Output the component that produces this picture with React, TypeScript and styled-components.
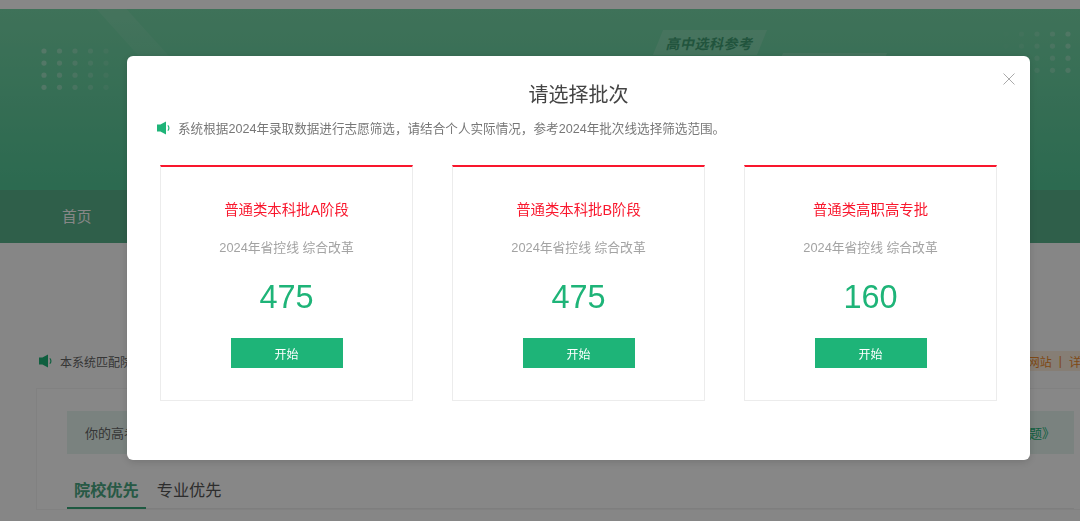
import React from 'react';
import styled, { createGlobalStyle } from 'styled-components';

const GREEN = '#1eb478';
const RED = '#f9172d';

const GlobalStyle = createGlobalStyle`
  html, body {
    margin: 0;
    padding: 0;
    height: 100%;
    overflow: hidden;
    background: #fdfdfd;
    font-family: "Liberation Sans", "Noto Sans CJK SC", sans-serif;
  }
  * {
    box-sizing: border-box;
  }
`;

const Page = styled.div`
  width: 1080px;
  height: 521px;
  overflow: hidden;
`;

const TopBar = styled.div`
  height: 9px;
  overflow: hidden;
  padding-left: 48px;
  background: #fff;
`;

const TopText = styled.div`
  margin-top: -15px;
  font-size: 13px;
  line-height: 17px;
  color: #d9772f;
`;

const Banner = styled.div`
  position: relative;
  height: 181px;
  overflow: hidden;
  background: linear-gradient(180deg, #77d7a8 0%, #53c897 100%);
`;

const Streak = styled.div`
  position: absolute;
  top: -20px;
  left: 128px;
  width: 30px;
  height: 110px;
  background: linear-gradient(180deg, rgba(255, 255, 255, 0.1), rgba(255, 255, 255, 0.02));
  transform: skewX(42deg);
`;

const DotsLeft = styled.svg`
  position: absolute;
  left: 40px;
  top: 38px;
`;

const DotsRight = styled.svg`
  position: absolute;
  left: 1002px;
  top: 21px;
`;

const Badge = styled.div<{ $left: number; $top: number }>`
  position: absolute;
  left: ${(p) => p.$left}px;
  top: ${(p) => p.$top}px;
  width: 104px;
  height: 25px;
  display: flex;
  align-items: center;
  justify-content: center;
  background: rgba(255, 255, 255, 0.14);
  transform: skewX(-22deg);
`;

const BadgeText = styled.span`
  font-size: 14px;
  font-weight: 700;
  letter-spacing: 0.5px;
  white-space: nowrap;
  color: #3f9f74;
  transform: skewX(10deg);
`;

const Nav = styled.nav`
  height: 53px;
  display: flex;
  align-items: center;
  padding: 0 0 3px 62px;
  background: #59b38c;
`;

const NavItem = styled.a`
  font-size: 14.7px;
  color: #fff;
`;

const NoticeRow = styled.div`
  display: flex;
  align-items: center;
  justify-content: space-between;
  height: 20px;
  margin: 108px -47px 0 39px;
`;

const NoticeLeft = styled.div`
  display: flex;
  align-items: center;
  gap: 8px;
  font-size: 12px;
  color: #666;
`;

const LinkPill = styled.div`
  height: 20px;
  padding: 0 10px;
  display: flex;
  align-items: center;
  gap: 7px;
  font-size: 12px;
  color: #ef8a2b;
  background: #fdeedd;
`;

const Panel = styled.section`
  width: 1068px;
  margin: 17px 0 0 36px;
  padding: 22px 30px 0;
  border: 1px solid #f3f3f3;
  border-right: 0;
  background: #ffffff;
`;

const Hint = styled.div`
  height: 43px;
  display: flex;
  align-items: center;
  justify-content: space-between;
  padding: 0 19px 0 18px;
  font-size: 13px;
  color: #666;
  background: #e6f6f0;
`;

const HintLink = styled.span`
  color: ${GREEN};
`;

const Tabs = styled.div`
  display: flex;
  height: 55px;
  border-bottom: 1px solid #eee;
`;

const Tab = styled.div<{ $active?: boolean }>`
  height: 55px;
  padding: 26px 7px 0;
  margin-right: 4px;
  font-size: 16.2px;
  line-height: 20px;
  font-weight: ${(p) => (p.$active ? 700 : 400)};
  color: ${(p) => (p.$active ? '#4aa883' : '#555')};
  border-bottom: ${(p) => (p.$active ? '2px solid #3aa87c' : '0')};
`;

const Overlay = styled.div`
  position: fixed;
  inset: 0;
  padding: 56px 0 0 127px;
  background: rgba(0, 0, 0, 0.47);
`;

const Modal = styled.div`
  position: relative;
  width: 903px;
  height: 404px;
  padding: 26px 33px 0;
  border-radius: 6px;
  background: #fff;
  box-shadow: 0 2px 8px rgba(0, 0, 0, 0.15);
`;

const CloseButton = styled.button`
  position: absolute;
  top: 17px;
  right: 15px;
  width: 12px;
  height: 12px;
  padding: 0;
  border: 0;
  background: none;
  display: flex;
`;

const Title = styled.h2`
  margin: 0;
  font-size: 20px;
  line-height: 26px;
  font-weight: 400;
  text-align: center;
  color: #444;
`;

const Notice = styled.div`
  display: flex;
  align-items: center;
  gap: 8px;
  margin: 9px 0 0 -3px;
  height: 20px;
  font-size: 12.6px;
  color: #777;

  svg {
    margin-top: 2px;
  }
`;

const Cards = styled.div`
  display: grid;
  grid-template-columns: repeat(3, 253px);
  column-gap: 39px;
  margin-top: 28px;
`;

const Card = styled.div`
  height: 236px;
  padding-top: 33px;
  display: flex;
  flex-direction: column;
  align-items: center;
  border: 1px solid #ececec;
  border-top: 2px solid ${RED};
`;

const CardTitle = styled.div`
  height: 20px;
  font-size: 14.4px;
  line-height: 20px;
  color: ${RED};
`;

const CardSub = styled.div`
  height: 18px;
  margin-top: 19px;
  font-size: 12.8px;
  line-height: 18px;
  color: #a3a3a3;
`;

const Score = styled.div`
  height: 40px;
  margin-top: 20px;
  font-size: 32.5px;
  line-height: 40px;
  color: ${GREEN};
`;

const StartButton = styled.button`
  width: 112px;
  height: 30px;
  margin-top: 21px;
  padding: 0;
  border: 0;
  font-family: inherit;
  font-size: 12px;
  color: #fff;
  background: ${GREEN};
`;

function SpeakerIcon() {
  return (
    <svg width="13" height="14" viewBox="0 0 13 14">
      <path d="M0 3.4h3.4L9 .6v12.8L3.4 10.6H0z" fill={GREEN} />
      <path d="M10.8 4.4a3.6 3.6 0 0 1 0 5.2" fill="none" stroke={GREEN} strokeWidth="1.2" />
    </svg>
  );
}

function CloseIcon() {
  return (
    <svg width="12" height="12" viewBox="0 0 12 12">
      <path d="M.5.5l11 11M11.5.5l-11 11" stroke="#aaa" strokeWidth="1" fill="none" />
    </svg>
  );
}

function DotGrid({ fade }: { fade: 'left' | 'right' }) {
  const cols = [0, 1, 2, 3, 4];
  const rows = [0, 1, 2, 3];
  return (
    <>
      {rows.map((r) =>
        cols.map((c) => (
          <circle
            key={`${r}-${c}`}
            cx={4 + c * 15.5}
            cy={4 + r * 12.1}
            r="2.6"
            fill="#fff"
            opacity={fade === 'left' ? 0.34 - c * 0.06 : 0.02 + c * 0.06}
          />
        )),
      )}
    </>
  );
}

const batches = [
  { name: '普通类本科批A阶段', score: 475 },
  { name: '普通类本科批B阶段', score: 475 },
  { name: '普通类高职高专批', score: 160 },
];

export default function App() {
  return (
    <Page>
      <GlobalStyle />
      <TopBar>
        <TopText>高考志愿填报</TopText>
      </TopBar>
      <Banner>
        <Streak />
        <DotsLeft width="72" height="48">
          <DotGrid fade="left" />
        </DotsLeft>
        <DotsRight width="72" height="48">
          <DotGrid fade="right" />
        </DotsRight>
        <Badge $left={658} $top={21}>
          <BadgeText>高中选科参考</BadgeText>
        </Badge>
        <Badge $left={778} $top={44} />
      </Banner>
      <Nav>
        <NavItem>首页</NavItem>
      </Nav>
      <NoticeRow>
        <NoticeLeft>
          <SpeakerIcon />
          本系统匹配院校及专业数据仅供参考
        </NoticeLeft>
        <LinkPill>
          官方网站 <span>|</span> 详情说明
        </LinkPill>
      </NoticeRow>
      <Panel>
        <Hint>
          <span>你的高考成绩及选科信息</span>
          <HintLink>《常见问题》</HintLink>
        </Hint>
        <Tabs>
          <Tab $active>院校优先</Tab>
          <Tab>专业优先</Tab>
        </Tabs>
      </Panel>
      <Overlay>
        <Modal>
          <CloseButton aria-label="关闭">
            <CloseIcon />
          </CloseButton>
          <Title>请选择批次</Title>
          <Notice>
            <SpeakerIcon />
            系统根据2024年录取数据进行志愿筛选，请结合个人实际情况，参考2024年批次线选择筛选范围。
          </Notice>
          <Cards>
            {batches.map((b) => (
              <Card key={b.name}>
                <CardTitle>{b.name}</CardTitle>
                <CardSub>2024年省控线 综合改革</CardSub>
                <Score>{b.score}</Score>
                <StartButton>开始</StartButton>
              </Card>
            ))}
          </Cards>
        </Modal>
      </Overlay>
    </Page>
  );
}
